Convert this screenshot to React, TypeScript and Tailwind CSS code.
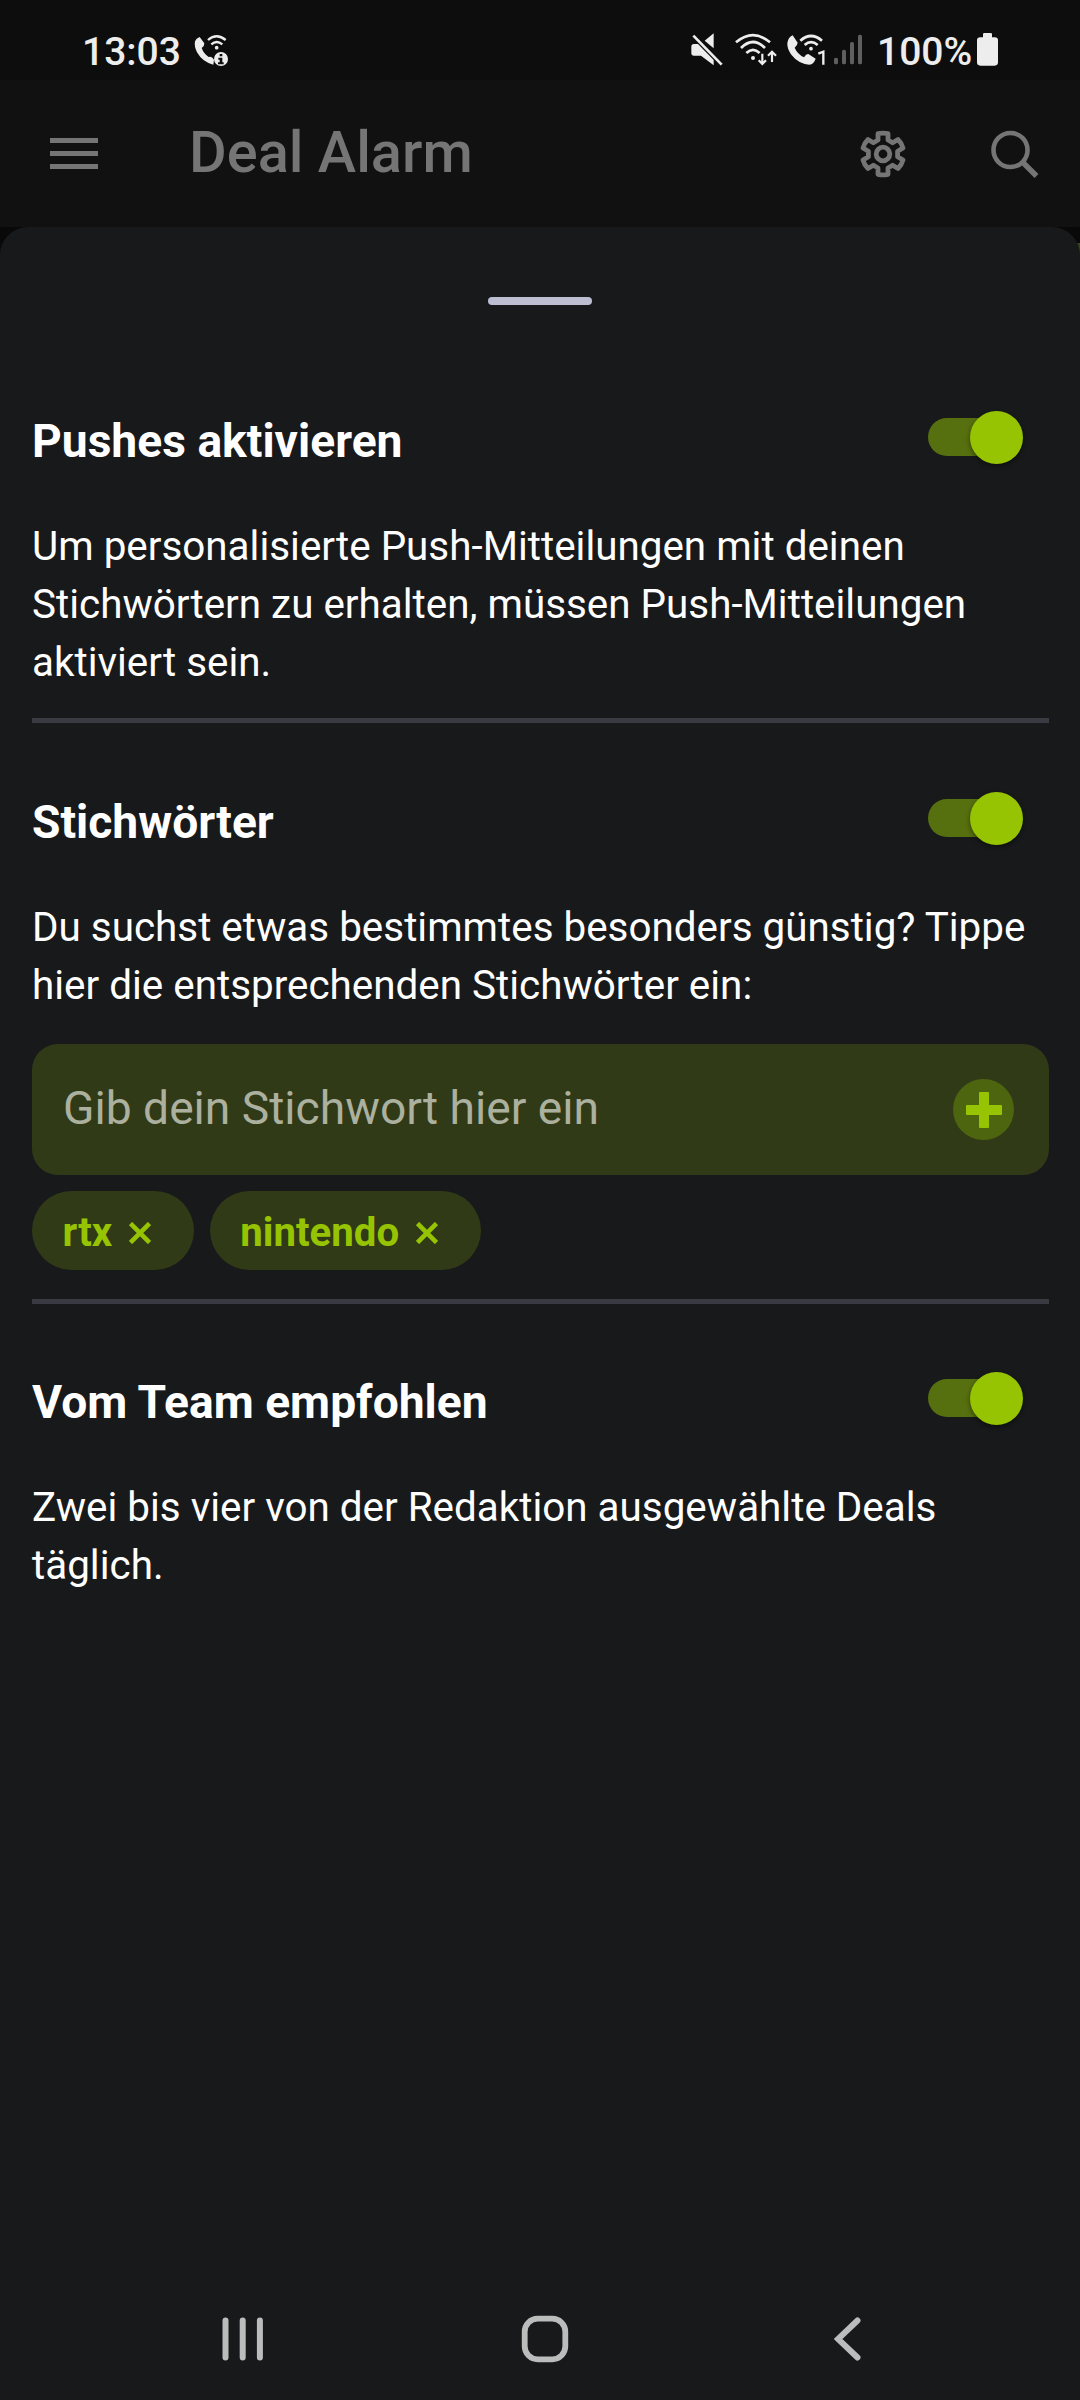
import { useState } from "react";
import clsx from "clsx";

function CallInfoIcon() {
  return (
    <svg viewBox="399 51 108 102" className="h-[34px] w-9" fill="none">
      <path
        d="M405 79Q408 70 419 66L433 85Q434 92 425 99Q431 116 446 126Q455 122 462 134L460 149Q428 142 411 112Q402 94 405 79Z"
        fill="#ededed"
      />
      <path d="M444 75Q470 52 497 75M454 88Q470 74 487 88" stroke="#ededed" strokeWidth="7" />
      <circle cx="470" cy="98" r="5.5" fill="#ededed" />
      <circle cx="483" cy="132" r="21" fill="#ededed" />
      <path d="M479 117h8v7h-8zM475 128h12v14h4v6h-17v-6h5v-8h-4z" fill="#0d0d0d" />
    </svg>
  );
}

function MuteIcon() {
  return (
    <svg viewBox="60 51 99 102" className="h-[34px] w-[33px]">
      <path d="M131 55V100L104 77ZM72 87H84L131 135V151L93 122H72Q64 122 64 114V95Q64 87 72 87Z" fill="#ededed" />
      <path d="M70 62L155 149" stroke="#ededed" strokeWidth="8" />
    </svg>
  );
}

function WifiIcon() {
  return (
    <svg viewBox="195 51 126 102" className="h-[34px] w-[42px]" fill="none" stroke="#ededed" strokeWidth="8">
      <path d="M198 82Q249 39 300 82M213 99Q249 63 285 99M229 114Q249 95 269 114" />
      <circle cx="249" cy="129" r="6" fill="#ededed" stroke="none" />
      <path d="M277 116V147M266 136L277 147L288 136M306 141V111M294 122L306 110L318 122" strokeWidth="6.5" />
    </svg>
  );
}

function WifiCallIcon() {
  return (
    <svg viewBox="348 51 120 102" className="h-[34px] w-10" fill="none">
      <path
        d="M352 84Q354 68 368 61L383 83Q383 89 374 98Q382 117 402 127Q409 116 415 117L437 131Q432 147 418 149Q385 146 364 119Q351 101 352 84Z"
        fill="#ededed"
      />
      <path d="M391 77Q423 49 456 77M404 90Q423 73 443 90" stroke="#ededed" strokeWidth="8" />
      <circle cx="423" cy="101" r="5.5" fill="#ededed" />
      <path d="M445 116L460 110V149" stroke="#ededed" strokeWidth="7" />
    </svg>
  );
}

function SignalIcon() {
  return (
    <svg viewBox="492 51 84 102" className="h-[34px] w-7" fill="#5f5f5f">
      <rect x="492" y="128" width="12" height="20" rx="5" />
      <rect x="516" y="104" width="12" height="44" rx="5" />
      <rect x="540" y="81" width="12" height="67" rx="5" />
      <rect x="564" y="59" width="12" height="89" rx="5" />
    </svg>
  );
}

function BatteryIcon() {
  return (
    <svg viewBox="918 51 69 102" className="h-[34px] w-[23px]" fill="#ededed">
      <rect x="939" y="54" width="27" height="24" rx="4" />
      <rect x="921" y="67" width="63" height="85" rx="10" />
    </svg>
  );
}

function StatusBar() {
  return (
    <div className="flex h-20 justify-between bg-[#0d0d0d] pr-[81px] pl-[82px] text-[39px] leading-[48px] font-medium text-[#ededed]">
      <div className="flex pt-7">
        <span className="w-[111px]">13:03</span>
        <span className="pt-1">
          <CallInfoIcon />
        </span>
      </div>
      <div className="flex pt-7">
        <div className="flex pt-1">
          <MuteIcon />
          <span className="ml-3">
            <WifiIcon />
          </span>
          <span className="ml-[9px]">
            <WifiCallIcon />
          </span>
          <span className="ml-2">
            <SignalIcon />
          </span>
        </div>
        <span className="ml-[15px] w-[99px] whitespace-nowrap">100%</span>
        <span className="pt-1">
          <BatteryIcon />
        </span>
      </div>
    </div>
  );
}

function AppBar() {
  return (
    <header className="flex h-[147px] items-center bg-[#111111] pr-[41px] pl-[49.5px] text-[#757575]">
      <button aria-label="Menü" className="flex flex-col gap-[7.7px]">
        <span className="h-[5.5px] w-12 bg-current" />
        <span className="h-[5.5px] w-12 bg-current" />
        <span className="h-[5.5px] w-12 bg-current" />
      </button>
      <h1 className="ml-[91.5px] flex-1 pb-[3px] text-[57.75px] leading-[68px] font-medium">Deal Alarm</h1>
      <button aria-label="Einstellungen">
        <svg viewBox="-24 -24 48 48" className="size-12" fill="none" stroke="currentColor" strokeWidth="4.8" strokeLinejoin="round">
          <path d="M-5-14V-20.3Q0-21.5 5-20.3V-14L9.6-11.3L15-14.5Q18.8-10.8 20-6L14.6-2.7V2.7L20 6Q18.8 10.8 15 14.5L9.6 11.3L5 14V20.3Q0 21.5-5 20.3V14L-9.6 11.3L-15 14.5Q-18.8 10.8-20 6L-14.6 2.7V-2.7L-20-6Q-18.8-10.8-15-14.5L-9.6-11.3Z" />
          <circle r="6.8" />
        </svg>
      </button>
      <button aria-label="Suche" className="ml-[84px]">
        <svg viewBox="0 0 48 48" className="size-12" fill="none" stroke="currentColor" strokeWidth="4.6">
          <circle cx="19.5" cy="20" r="17" />
          <path d="M31.5 32L45.5 46" strokeWidth="5.4" />
        </svg>
      </button>
    </header>
  );
}

function Toggle({ on, onChange, label }: { on: boolean; onChange: () => void; label: string }) {
  return (
    <button role="switch" aria-checked={on} aria-label={label} onClick={onChange} className="flex h-[54px] w-[95px] items-center">
      <span className={clsx("flex h-[38px] w-[90px] items-center rounded-full", on ? "justify-end bg-[#57700f]" : "bg-[#444]")}>
        <span className={clsx("size-[53px] shrink-0 rounded-full shadow-[0_2px_5px_rgba(0,0,0,0.45)]", on ? "-mr-[5px] bg-[#96c403]" : "bg-[#aaa]")} />
      </span>
    </button>
  );
}

function SectionHead({ title }: { title: string }) {
  const [on, setOn] = useState(true);

  return (
    <div className="flex h-[60px] items-start justify-between pr-[26px]">
      <h2 className="pt-px text-[46.2px] leading-[60px] font-bold">{title}</h2>
      <Toggle on={on} onChange={() => setOn(!on)} label={title} />
    </div>
  );
}

function Chip({ label }: { label: string }) {
  return (
    <span className="flex h-[79px] items-center rounded-full bg-[#313a17] pr-[43px] pl-[30.5px] text-[40.2px] font-bold text-[#96c403]">
      <span className="pt-[5px]">{label}</span>
      <svg viewBox="0 0 22 22" className="mt-[5px] ml-[16.5px] size-[22px]" stroke="currentColor" strokeWidth="4.6">
        <path d="M1.5 1.5L20.5 20.5M20.5 1.5L1.5 20.5" />
      </svg>
    </span>
  );
}

function NavBar() {
  return (
    <nav className="mt-auto flex h-[123px] items-center pl-[221px] text-[#bbbcbc]">
      <svg viewBox="0 0 44 48" className="h-12 w-11" stroke="currentColor" strokeWidth="6" strokeLinecap="round">
        <path d="M4.5 5.5V42.5M21.7 5.5V42.5M38.9 5.5V42.5" />
      </svg>
      <svg viewBox="0 0 48 48" className="ml-64 size-12" fill="none" stroke="currentColor" strokeWidth="5.8">
        <rect x="3.7" y="3.7" width="40.6" height="40.6" rx="13" />
      </svg>
      <svg viewBox="0 0 28 48" className="ml-[265px] h-12 w-7" fill="none" stroke="currentColor" strokeWidth="6" strokeLinecap="round">
        <path d="M23.5 5.5L4 24L23.5 42.5" />
      </svg>
    </nav>
  );
}

const keywords = ["rtx", "nintendo"];

export default function App() {
  return (
    <div className="flex h-[2400px] w-[1080px] flex-col bg-[#090909] font-['Roboto',sans-serif]">
      <StatusBar />
      <AppBar />

      <div className="relative flex flex-1 flex-col">
        {/* Edge of the page behind the sheet */}
        <div className="absolute top-4 right-0 h-3 w-1 bg-[#38431a]" />

        <main className="relative flex flex-1 flex-col rounded-t-[28px] bg-[#18191b] text-white">
          {/* Drag handle */}
          <div className="mt-[70px] h-2 w-[104px] self-center rounded-full bg-[#bcbfd2]" />

          <div className="mr-[31px] ml-8 text-[40.4px] leading-[58px]">
            <section className="border-b-[5px] border-[#393a42] pt-[105px] pb-[26px]">
              <SectionHead title="Pushes aktivieren" />
              <p className="mt-12">
                Um personalisierte Push-Mitteilungen mit deinen
                <br />
                Stichwörtern zu erhalten, müssen Push-Mitteilungen
                <br />
                aktiviert sein.
              </p>
            </section>

            <section className="border-b-[5px] border-[#393a42] pt-[68px] pb-[29px]">
              <SectionHead title="Stichwörter" />
              <p className="mt-12">
                Du suchst etwas bestimmtes besonders günstig? Tippe
                <br />
                hier die entsprechenden Stichwörter ein:
              </p>
              <div className="mt-[29px] flex h-[131px] items-center justify-between rounded-[26px] bg-[#313a17] pr-[35px] pl-[31px]">
                <span className="pb-[3px] text-[46.2px] text-[#acb09f]">Gib dein Stichwort hier ein</span>
                <button aria-label="Hinzufügen" className="flex size-[61px] items-center justify-center rounded-full bg-[#4e650f]">
                  <svg viewBox="0 0 36 36" className="size-9" fill="#96c403">
                    <rect x="13" width="10" height="36" rx="1" />
                    <rect y="13" width="36" height="10" rx="1" />
                  </svg>
                </button>
              </div>
              <div className="mt-4 flex gap-4">
                {keywords.map((k) => (
                  <Chip key={k} label={k} />
                ))}
              </div>
            </section>

            <section className="pt-[67px]">
              <SectionHead title="Vom Team empfohlen" />
              <p className="mt-12">
                Zwei bis vier von der Redaktion ausgewählte Deals
                <br />
                täglich.
              </p>
            </section>
          </div>

          <NavBar />
        </main>
      </div>
    </div>
  );
}
